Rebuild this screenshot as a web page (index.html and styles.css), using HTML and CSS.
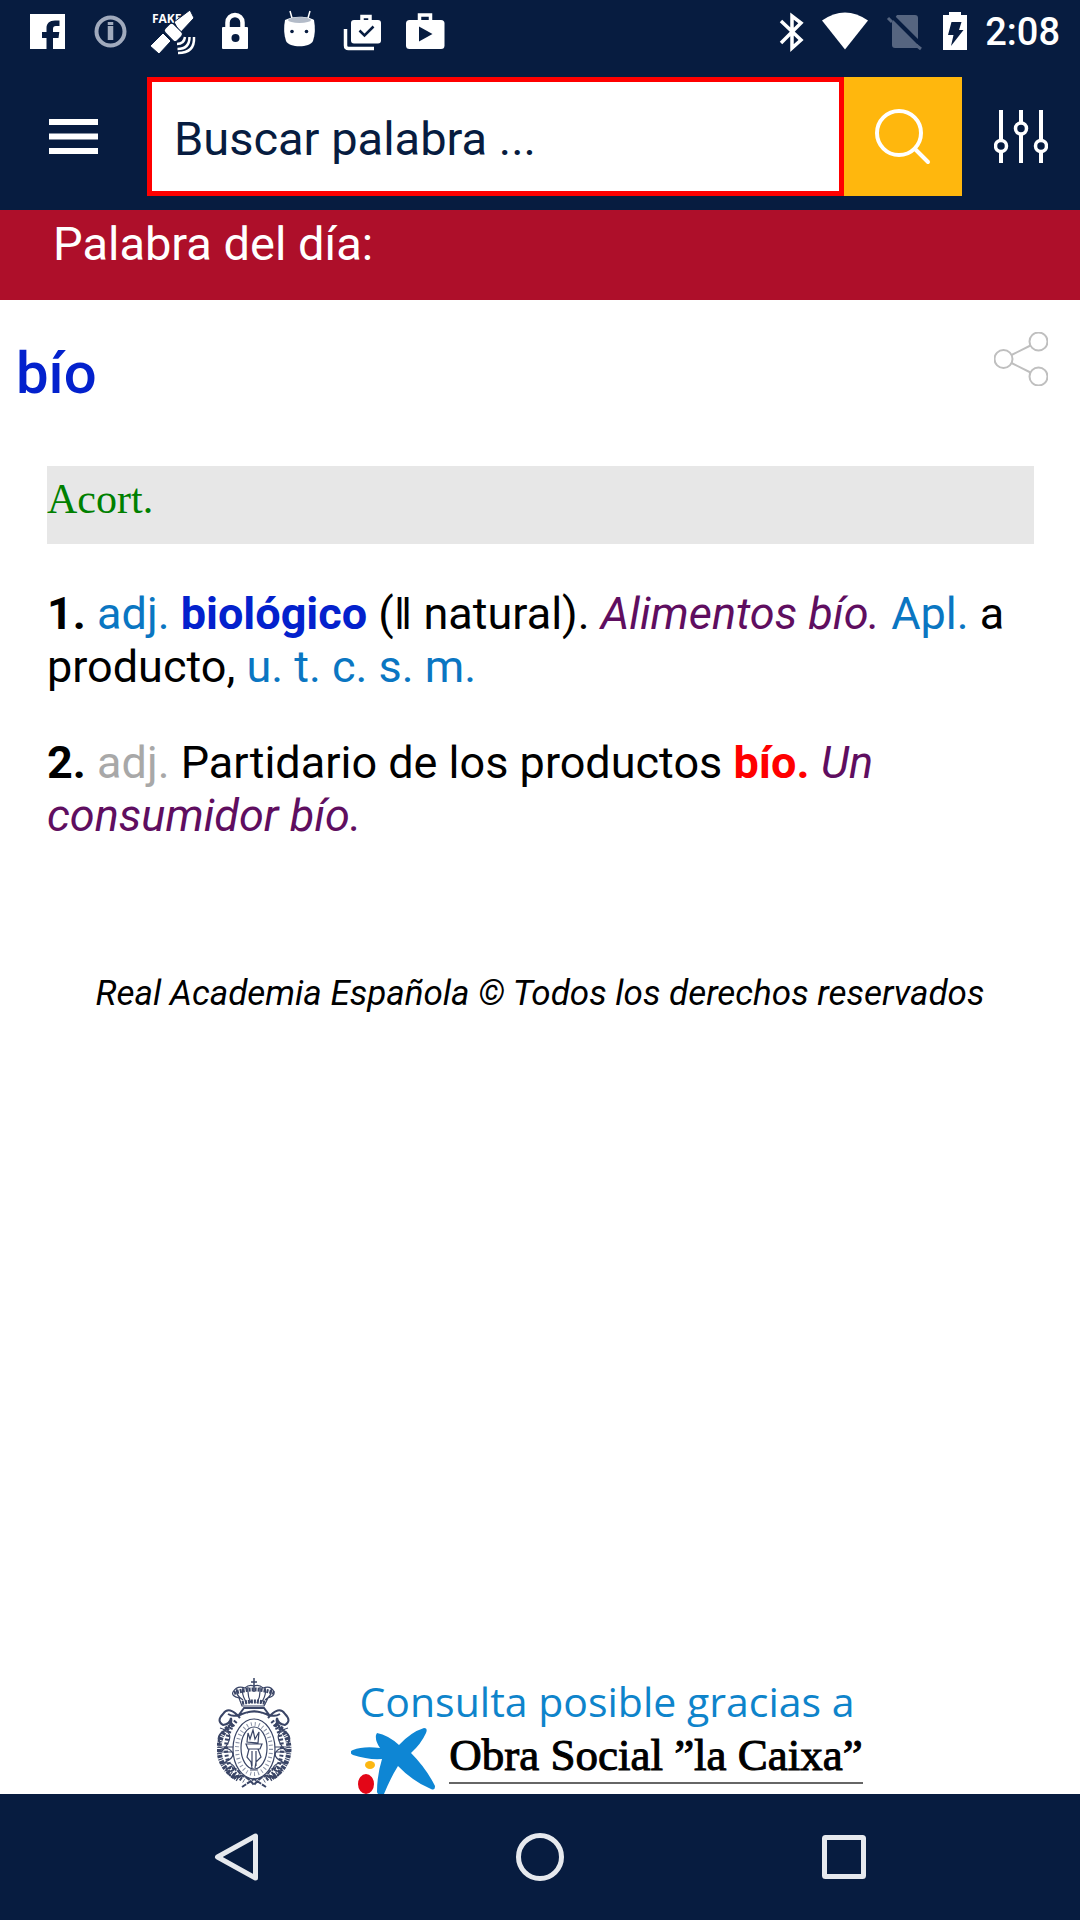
FILE: index.html
```html
<!DOCTYPE html>
<html lang="es">
<head>
<meta charset="utf-8">
<meta name="viewport" content="width=device-width, initial-scale=1">
<title>Diccionario de la lengua española</title>
<link rel="stylesheet" href="styles.css">
</head>
<body>
<header class="top">
  <div class="status">
    <div class="status-group">
      <svg class="notice" viewBox="0 0 63 64" aria-hidden="true"><path fill="#fff" d="M14 14h35v35H37V38h5.500l.8-6H37v-3c0-2 .8-3 3-3h3.500v-5.500H39c-5.500 0-8.500 3-8.500 7.500v4H26v6h4.500v11H14z"/></svg>
      <svg class="notice" viewBox="0 0 63 64" aria-hidden="true"><g fill="none" stroke="#a0aabd"><circle cx="31.500" cy="31.500" r="14" stroke-width="4"/><path stroke-width="5.500" d="M31.500 26v14M31.500 22v3"/></g></svg>
      <svg class="notice" viewBox="0 0 63 64" aria-hidden="true"><text x="10" y="23" class="fake">FAKE</text><g fill="#fff" stroke="#071c40"><path stroke-width="1" d="M32 22l16-12 4 8-14 15zM8 46l13-13 8 8-12 13z"/><rect x="-6" y="-8" width="12" height="17" rx="3" transform="translate(31 32) rotate(-45)"/></g><g fill="none" stroke="#fff" stroke-width="2.500"><path d="M43 37q-1 7-8 7M47.500 37q0 12-12 12M52 37q1 16-16 16"/></g></svg>
      <svg class="notice" viewBox="0 0 63 64" aria-hidden="true"><path fill="none" stroke="#fff" stroke-width="4.500" d="M22.500 28v-5.500a7.500 7.500 0 0 1 15 0V28"/><rect x="17" y="27" width="26" height="22" rx="1" fill="#fff"/><circle cx="30.500" cy="38" r="4" fill="#071c40"/></svg>
      <svg class="notice" viewBox="0 0 63 64" aria-hidden="true"><path stroke="#fff" stroke-width="1.500" d="M22 11l2 7M42 11l-2 7"/><path fill="#fff" d="M17 20c7-4.500 23-4.500 29 0 1.500 8 1 15-1 21-3 7-24 7-27 0-2-6-2.500-13-1-21z"/><ellipse cx="31.500" cy="20" rx="11.500" ry="3" fill="#b3bbc8"/><circle cx="24" cy="31.500" r="1.800" fill="#071c40"/><circle cx="38.500" cy="31.500" r="1.800" fill="#071c40"/></svg>
      <svg class="notice" viewBox="0 0 63 64" aria-hidden="true"><g fill="none" stroke="#fff" stroke-width="3.500"><path d="M14.500 29v16.500q0 3 3 3H43M31 21v-4.500h8V21"/></g><rect x="20" y="20" width="30" height="23.500" rx="3" fill="#fff"/><path fill="none" stroke="#071c40" stroke-width="2.500" d="M28.500 30.500l5 5 9-9"/></svg>
      <svg class="notice" viewBox="0 0 63 64" aria-hidden="true"><path fill="none" stroke="#fff" stroke-width="3.500" d="M25.500 21v-6h11v6"/><rect x="12" y="20" width="38.500" height="29" rx="3.500" fill="#fff"/><path fill="#071c40" d="M25 26.500v15L38.500 34z"/></svg>
    </div>
    <div class="status-group">
      <svg class="signal" viewBox="0 0 54 64" aria-hidden="true"><path fill="none" stroke="#fff" stroke-width="3.500" d="M16 21l20 19-9 8V16l9 7-20 20"/></svg>
      <svg class="signal" viewBox="0 0 54 64" aria-hidden="true"><path fill="#fff" d="M3 20.500q23-16 46 0L26 49.500z"/></svg>
      <svg class="signal" viewBox="0 0 54 64" aria-hidden="true"><path fill="#566580" d="M24 15h18q3 0 3 3v30H22q-3 0-3-3V22z"/><path stroke="#071c40" stroke-width="4" d="M19 16l29 29"/><path stroke="#566580" stroke-width="3" d="M15 18l4 4M43 45l5 4"/></svg>
      <svg class="signal" viewBox="0 0 54 64" aria-hidden="true"><path fill="#fff" d="M22 12h12v3h6v35H16V15h6z"/><path fill="#071c40" d="M24.500 22h10L32 30h4.500L24 46l2.500-11H21z"/></svg>
      <span class="clock">2:08</span>
    </div>
  </div>
  <form class="bar">
    <button class="icon-button menu" type="button" aria-label="Menú"><svg width="50" height="36" viewBox="0 0 50 36"><path stroke="#fff" stroke-width="6" d="M0 3h49M0 17.500h49M0 32h49"/></svg></button>
    <input class="search" type="text" placeholder="Buscar palabra ..." aria-label="Buscar palabra">
    <button class="icon-button go" type="submit" aria-label="Buscar"><svg width="56" height="56" viewBox="0 0 56 56"><g fill="none" stroke="#fff" stroke-width="4" stroke-linecap="round"><circle cx="24" cy="24" r="22"/><path d="M40 40l13 13"/></g></svg></button>
    <button class="icon-button" type="button" aria-label="Opciones"><svg width="54" height="54" viewBox="0 0 54 54"><g fill="none" stroke="#fff" stroke-width="4"><path d="M7 0v30M7 42v11M27 0v12M27 24v29M47 0v30M47 42v11"/><g stroke-width="3.500"><circle cx="7" cy="36" r="5.500"/><circle cx="27" cy="18.500" r="5.500"/><circle cx="47" cy="36" r="5.500"/></g></g></svg></button>
  </form>
</header>
<div class="day">Palabra del día:</div>
<main class="entry">
  <div class="entry-head">
    <h1 class="lemma">bío</h1>
    <button class="share" type="button" aria-label="Compartir"><svg width="54" height="54" viewBox="0 0 54 54"><g fill="none" stroke="#bfbfbf" stroke-width="2"><circle cx="9.500" cy="27" r="9"/><circle cx="44.500" cy="9.500" r="9"/><circle cx="44.500" cy="44.500" r="9"/><path d="M17.500 23l19-9.500M17.500 31l19 9.500"/></g></svg></button>
  </div>
  <div class="senses">
    <p class="origin">Acort.</p>
    <p class="sense"><b>1.</b> <span class="abbr">adj.</span> <a class="ref" href="#biologico">biológico</a> (‖ natural). <i class="example">Alimentos bío.</i> <span class="abbr">Apl.</span> a producto, <span class="abbr">u. t. c. s. m.</span></p>
    <p class="sense"><b>2.</b> <span class="muted">adj.</span> Partidario de los productos <b class="hit">bío.</b> <i class="example">Un consumidor bío.</i></p>
  </div>
  <p class="rights">Real Academia Española © Todos los derechos reservados</p>
</main>
<footer class="sponsor">
  <svg class="crest" width="76" height="112" viewBox="0 0 76 112" role="img" aria-label="Real Academia Española">
    <g fill="none" stroke="#3a4566" stroke-width="1.200">
      <path stroke-width="1.500" d="M37 0v14M34 4h6"/>
      <path d="M22 20q-8-2-6-6 4-7 12-4 4-4 9-2 5-2 9 2 8-3 11 4 1 4-6 6l-4 8H25zM26 10q-2 7 4 15M31 9q-1 8 3 16M43 9q1 8-3 16M48 10q2 7-4 15M20 11q-2 6 6 11M54 11q2 6-6 11"/>
      <path stroke-width="4" stroke-dasharray="2 1" d="M17 15q20-7 40 0M25 25q12-3 24 0"/>
      <path stroke-width="2" d="M27 30l-6 8q16-9 32 0l-6-8z"/>
      <path d="M30 35q7-4 15 0"/>
      <path stroke-width="5" stroke-dasharray="3 1 1 1" d="M16 46Q2 54 2 72q1 19 19 29M58 46q14 8 14 26-1 19-19 29"/>
      <path stroke-width="4" stroke-dasharray="2 2" d="M19 43Q9 54 9 72q1 20 18 31M55 43q10 11 10 29-1 20-18 31"/>
      <ellipse cx="37" cy="71" rx="21" ry="30"/>
      <ellipse cx="37" cy="71" rx="17" ry="25" stroke="#8a92a8" stroke-width="4" stroke-dasharray="1 3"/>
      <ellipse cx="37" cy="70" rx="13" ry="21"/>
      <path d="M30 64l1-9 2 6 3-9 2 9 4-7-1 11zM29 66h16l-2 5H31zM32 71l-2 8 4 5 1 6M41 71l3 8-5 5-1 6M35 73v15M39 73v15M33 92h8"/>
      <path stroke-width="2" d="M23 40Q12 27 6 36q-7 7 0 11 7-1 8-7 2 7-7 13Q-1 58 3 65M51 40q11-13 17-4 7 7 0 11-7-1-8-7-2 7 7 13 8 5 4 12M11 36q5 3 10 1M63 36q-5 3-10 1"/>
      <path d="M3 50q14 4 8 15T2 72q9-4 13 2T4 86q12-4 15 7M71 50q-14 4-8 15t9 7q-9-4-13 2t11 12q-12-4-15 7M1 69h15M1 74h15M58 69h15M58 74h15"/>
      <path stroke-width="2" stroke-dasharray="5 1" d="M9 91q11-4 15 7-9 6-15-7M65 91q-11-4-15 7 9 6 15-7M17 99q10-5 20 8M57 99q-10-5-20 8M25 109l12-8 12 8"/>
    </g>
  </svg>
  <div class="thanks">
    <p class="thanks-line">Consulta posible gracias a</p>
    <div class="brand">
      <svg class="star" width="86" height="66" viewBox="0 0 86 66" aria-hidden="true"><path fill="#0e86d4" d="M26 5q11 2 22 12Q60 4 73 0q4 0 2 5-5 11-15 20 15 15 24 33 0 5-4 3-19-8-33-23-7 11-14 28-6 2-7-2 0-17 5-33Q17 32 2 27q-5-3 0-5 10-4 27-2-5-7-4-13z"/><ellipse cx="19" cy="37" rx="5" ry="4" fill="#fcb712"/><ellipse cx="15" cy="56" rx="8" ry="10" fill="#e30617"/></svg>
      <p class="brand-name">Obra Social ”la Caixa”</p>
    </div>
  </div>
</footer>
<nav class="system">
  <button class="system-key" type="button" aria-label="Atrás"><svg width="50" height="50" viewBox="0 0 50 50"><path fill="none" stroke="#e6e9ee" stroke-width="5" stroke-linejoin="round" d="M44.500 4v42L6.500 25z"/></svg></button>
  <button class="system-key" type="button" aria-label="Inicio"><svg width="50" height="50" viewBox="0 0 50 50"><circle cx="25" cy="25" r="21.500" fill="none" stroke="#e6e9ee" stroke-width="5"/></svg></button>
  <button class="system-key" type="button" aria-label="Recientes"><svg width="50" height="50" viewBox="0 0 50 50"><rect x="5.500" y="5.500" width="39" height="39" rx="1" fill="none" stroke="#e6e9ee" stroke-width="5"/></svg></button>
</nav>
</body>
</html>
```
FILE: styles.css
```css
* { box-sizing: border-box; }

body {
  margin: 0;
  min-height: 100vh;
  display: flex;
  flex-direction: column;
  background: #fff;
  color: #000;
  font-family: Roboto, "Liberation Sans", sans-serif;
}

h1, p { margin: 0; }
svg { display: block; flex: none; }

button {
  padding: 0;
  border: 0;
  background: none;
  display: flex;
  align-items: center;
  justify-content: center;
}

.top { background: #071c40; padding-bottom: 14px; }

.status {
  display: flex;
  justify-content: space-between;
  padding: 0 20px 0 16px;
  height: 64px;
}
.status-group { display: flex; align-items: center; }
.notice { width: 63px; height: 64px; }
.signal { width: 54px; height: 64px; }
.fake { font: 700 12px "Open Sans", sans-serif; fill: #fff; }
.clock {
  padding-left: 4px;
  color: #fff;
  font-size: 38px;
  font-weight: 500;
  line-height: 66px;
}

.bar { display: flex; height: 132px; padding-top: 13px; }
.icon-button { width: 118px; }
.menu { width: 147px; }
.go { background: #ffb70d; }
.search {
  flex: 1;
  min-width: 0;
  padding: 3px 22px 0;
  border: 5px solid #f00;
  border-radius: 0;
  background: #fff;
  color: #071c40;
  font: 47px Roboto, "Liberation Sans", sans-serif;
}
.search::placeholder { color: #071c40; opacity: 1; }

.day {
  padding: 6px 53px 28px;
  background: #ae0f2a;
  color: #fff;
  font-size: 47px;
  line-height: 56px;
}

.entry { flex: 1; padding-top: 32px; }
.entry-head {
  display: flex;
  justify-content: space-between;
  align-items: flex-start;
  padding: 0 32px 0 16px;
}
.lemma {
  padding-top: 9px;
  color: #0321cd;
  font-size: 58px;
  font-weight: 500;
  line-height: 64px;
}

.senses {
  display: flex;
  flex-direction: column;
  gap: 43px;
  margin: 61px 46px 0 47px;
}
.origin {
  padding: 9px 0 21px;
  background: #e7e7e7;
  color: #008000;
  font-family: "Liberation Serif", serif;
  font-size: 42px;
  line-height: 48px;
}
.sense { font-size: 45px; line-height: 53px; }
.abbr { color: #0a76c2; }
.muted { color: #a8a8a8; }
.ref { color: #0321cd; font-weight: 700; text-decoration: none; }
.example { color: #5f0e60; }
.hit { color: #f00; }
.rights {
  margin-top: 132px;
  font-size: 35px;
  font-style: italic;
  line-height: 40px;
  text-align: center;
}

.sponsor {
  display: flex;
  justify-content: center;
  align-items: flex-start;
  gap: 58px;
}
.thanks-line {
  padding-bottom: 4px;
  color: #0e84cb;
  font-family: "Open Sans", sans-serif;
  font-size: 41px;
  line-height: 46px;
  text-align: center;
}
.brand { display: flex; gap: 12px; }
.brand-name {
  align-self: flex-start;
  border-bottom: 2px solid #666;
  font-family: "Liberation Serif", serif;
  font-size: 45px;
  line-height: 54px;
  -webkit-text-stroke: 1px #000;
}

.system {
  display: flex;
  justify-content: center;
  gap: 254px;
  padding: 38px 0;
  background: #071c40;
}
.system-key { width: 50px; height: 50px; }
```
